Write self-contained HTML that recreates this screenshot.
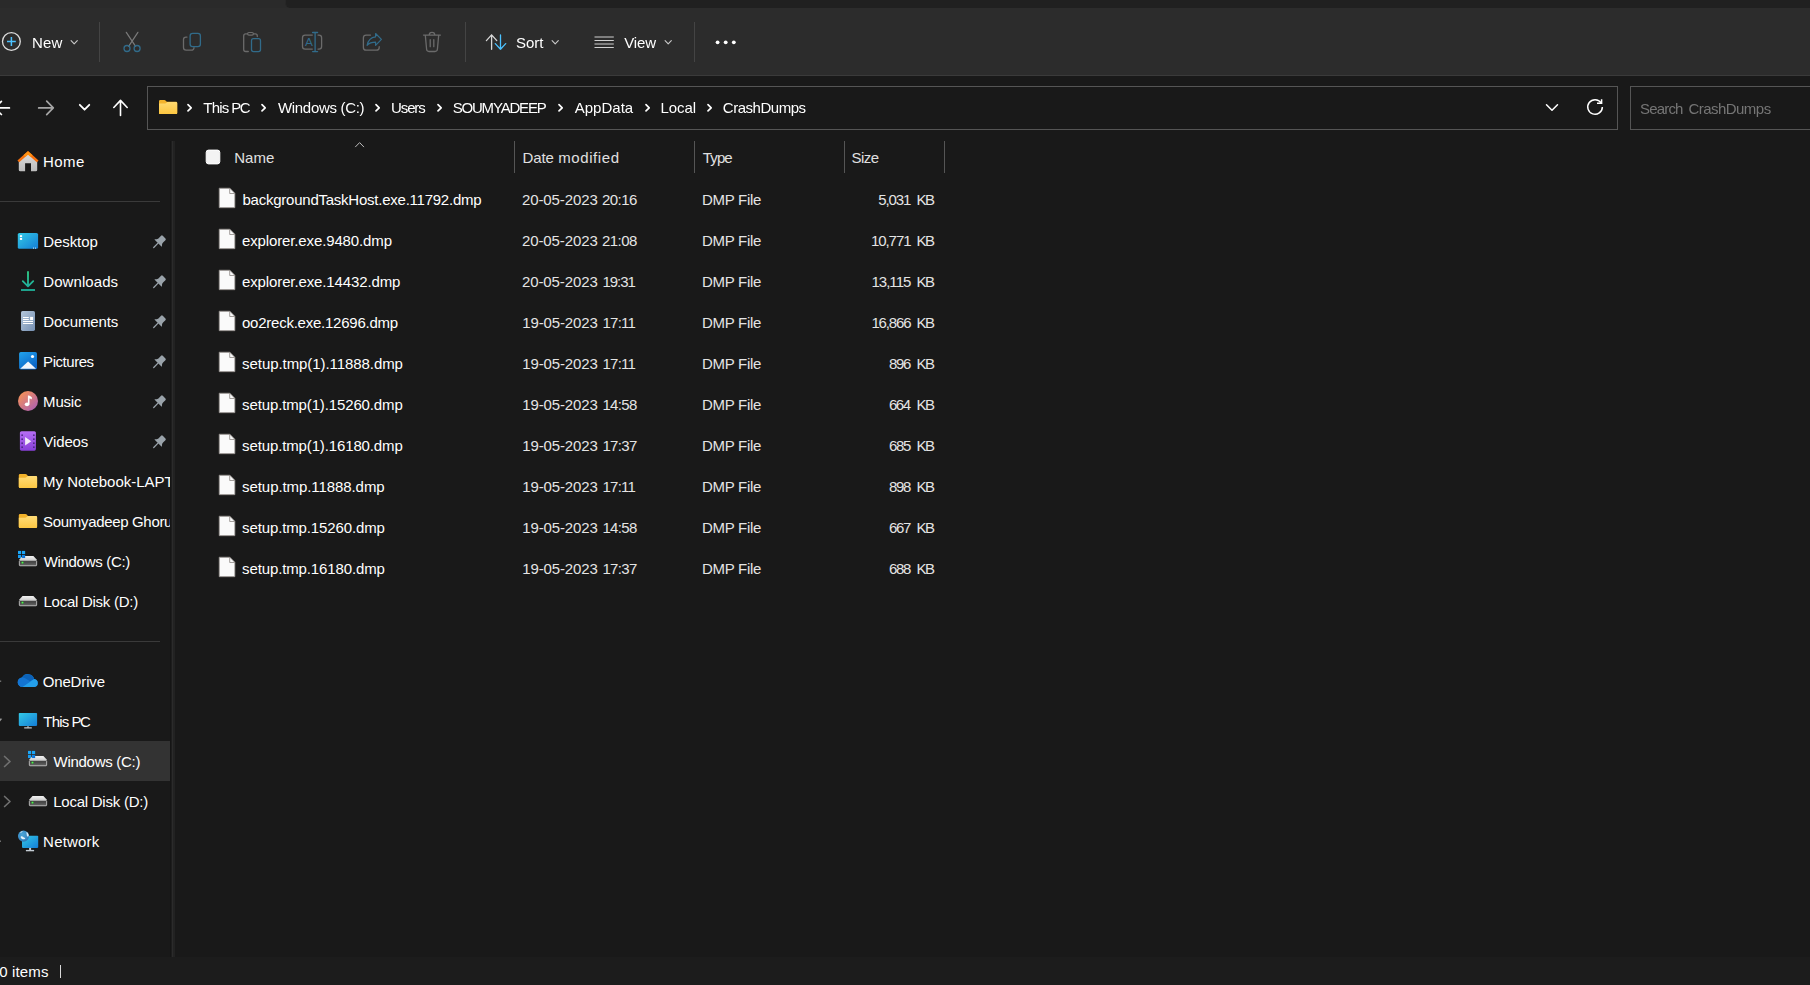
<!DOCTYPE html>
<html lang="en"><head><meta charset="utf-8"><title>CrashDumps</title>
<style>
html,body{margin:0;padding:0;background:#191919;overflow:hidden}
body{width:1810px;height:985px;position:relative;font-family:"Liberation Sans",sans-serif;color:#fff}
.t{position:absolute;white-space:pre;line-height:20px;height:20px}
.abs{position:absolute}
#tabstrip{left:285px;top:0;width:1525px;height:8px;background:#202020;border-left:1px solid #272727;border-bottom-left-radius:5px}
#tab{left:0;top:0;width:1810px;height:8px;background:#2a2a2a}
#toolbar{left:0;top:8px;width:1810px;height:67px;background:#2c2c2c}
#tbline{left:0;top:75px;width:1810px;height:1px;background:#3a3a3a}
.vsep{position:absolute;width:1px;background:#444}
#addr{left:147px;top:86px;width:1469px;height:42px;border:1px solid #555;box-sizing:content-box}
#search{left:1630px;top:86px;width:200px;height:42px;border:1px solid #555}
#sidediv{left:170px;top:141px;width:5px;height:816px;background:linear-gradient(90deg,#151515 0,#151515 1px,#1d1d1d 1px,#1d1d1d 1.700px,#2b2b2b 1.700px,#2b2b2b 3.300px,#222 3.300px,#222 5px)}
.hline{position:absolute;height:1px;background:#3a3a3a;left:0;width:160px}
#sel{left:0;top:741px;width:170px;height:40px;background:#333}
#status{left:0;top:957px;width:1810px;height:28px;background:#1c1c1c}
.colsep{position:absolute;top:141px;height:32px;width:1px;background:#555}
svg{position:absolute;overflow:visible}
#sbclip{position:absolute;left:0;top:0;width:170px;height:985px;overflow:hidden}
#gtexts{position:absolute;left:0;top:0;width:1810px;height:985px;will-change:transform}

</style></head>
<body>
<div class="abs" id="tab"></div>
<div class="abs" id="tabstrip"></div>
<div class="abs" id="toolbar"></div>
<div class="abs" id="tbline"></div>
<div class="vsep" style="left:99px;top:22px;height:40px"></div>
<div class="vsep" style="left:465px;top:22px;height:40px"></div>
<div class="vsep" style="left:694px;top:22px;height:40px"></div>
<div class="abs" id="addr"></div>
<div class="abs" id="search"></div>
<div class="abs" id="sidediv"></div>
<div class="hline" style="top:201px"></div>
<div class="hline" style="top:641px"></div>
<div class="abs" id="sel"></div>
<div class="abs" id="status"></div>
<div class="colsep" style="left:514px"></div>
<div class="colsep" style="left:694px"></div>
<div class="colsep" style="left:844px"></div>
<div class="colsep" style="left:944px"></div>

<!--ICONS_TOP-->
<div class="abs" style="left:60px;top:965px;width:1px;height:13px;background:#d8d8d8"></div>
<svg class="abs" style="left:0;top:0" width="1810" height="985" viewBox="0 0 1810 985" fill="none" stroke-linecap="round" stroke-linejoin="round">
<!-- New -->
<circle cx="11.4" cy="41.5" r="8.9" stroke="#dcdcdc" stroke-width="1.3"/>
<path d="M7 41.500h8.800M11.400 37.100v8.800" stroke="#4cc2ff" stroke-width="1.500" stroke-linecap="butt"/>
<path d="M71.1 40.700l3.100 3.100 3.100-3.100" stroke="#c8c8c8" stroke-width="1.150"/>
<!-- Cut -->
<path d="M126.3 32.3l9.3 14M137.9 32.3l-9.3 14" stroke="#7a7a7a" stroke-width="1.2"/>
<circle cx="127" cy="48.5" r="3" stroke="#316b8a" stroke-width="1.3"/>
<circle cx="137.1" cy="48.5" r="3" stroke="#316b8a" stroke-width="1.3"/>
<!-- Copy -->
<path d="M187 37.1h-1a2.5 2.5 0 0 0-2.5 2.5v8a2.6 2.6 0 0 0 2.6 2.6h5.4a2.5 2.5 0 0 0 2.5-2.5" stroke="#6b6b6b" stroke-width="1.3"/>
<rect x="190.1" y="33.4" width="10.3" height="13.2" rx="2.6" stroke="#316b8a" stroke-width="1.3"/>
<!-- Paste -->
<path d="M247.3 33.9h-1.6a2 2 0 0 0-2 2v13.6a2 2 0 0 0 2 2h2.6M253.7 33.9h1.6a2 2 0 0 1 2 2v0.6" stroke="#6b6b6b" stroke-width="1.3"/>
<rect x="247.6" y="32.5" width="5.8" height="2.6" rx="1.3" stroke="#6b6b6b" stroke-width="1.2"/>
<rect x="251.5" y="38.7" width="9" height="12.9" rx="2" stroke="#316b8a" stroke-width="1.3"/>
<!-- Rename -->
<path d="M312.3 35.1h-7.2a2.6 2.6 0 0 0-2.6 2.6v8.8a2.6 2.6 0 0 0 2.6 2.6h7.2M318 35.1h1a2.6 2.6 0 0 1 2.6 2.6v8.8a2.6 2.6 0 0 1-2.6 2.6h-1" stroke="#6b6b6b" stroke-width="1.3"/>
<path d="M312.6 32.5h5M312.6 51.6h5M315.1 32.5v19.1" stroke="#316b8a" stroke-width="1.3"/>
<text x="309" y="45.800" text-anchor="middle" font-family="Liberation Sans, sans-serif" font-size="10.600" fill="#316b8a" stroke="none" transform="translate(309 0) scale(1.120 1) translate(-309 0)">A</text>
<!-- Share -->
<path d="M370.5 35.1h-4.4a2.7 2.7 0 0 0-2.7 2.7v9.7a2.7 2.7 0 0 0 2.7 2.7h10.4a2.7 2.7 0 0 0 2.7-2.7v-0.8" stroke="#6b6b6b" stroke-width="1.3"/>
<path d="M367.100 45.300c0.900-4.700 3.900-8 8.500-8.500v-3.300l5.800 5.900-5.800 5.900v-3.100c-3.600 0-6.400 0.900-8.500 3.100z" stroke="#316b8a" stroke-width="1.200"/>
<!-- Delete -->
<path d="M423.5 35.1h16.9M429.2 35.1a2.8 2.8 0 0 1 5.6 0M425.3 35.1l1.3 14.2a2.4 2.4 0 0 0 2.4 2.2h6a2.4 2.4 0 0 0 2.4-2.2l1.3-14.2M430.2 39.7v7M433.8 39.7v7" stroke="#6b6b6b" stroke-width="1.3"/>
<!-- Sort -->
<path d="M491.6 49.3v-14.4M486.4 40.6l5.2-5.7 5.2 5.7" stroke="#d8d8d8" stroke-width="1.3"/>
<path d="M500.5 34.9v14.4M495.3 43.6l5.2 5.7 5.2-5.7" stroke="#4cc2ff" stroke-width="1.3"/>
<path d="M552.1 40.700l3.100 3.100 3.100-3.100" stroke="#c8c8c8" stroke-width="1.150"/>
<!-- View -->
<path d="M594.5 37h19.3M594.5 40.5h19.3M594.5 44h19.3M594.5 47.5h19.3" stroke="#d0d0d0" stroke-width="1.2" stroke-linecap="butt"/>
<path d="M665.1 40.700l3.100 3.100 3.100-3.100" stroke="#c8c8c8" stroke-width="1.150"/>
<!-- More -->
<circle cx="717.600" cy="42.300" r="1.900" fill="#fff"/><circle cx="725.700" cy="42.300" r="1.900" fill="#fff"/><circle cx="733.800" cy="42.300" r="1.900" fill="#fff"/>
<!-- Nav -->
<path d="M-5.200 107.900h14.600M1.400 101.300l-6.600 6.600 6.600 6.600" stroke="#fff" stroke-width="1.700"/>
<path d="M38.700 107.900h14.500M46.700 101.200l6.600 6.700-6.600 6.700" stroke="#a6a6a6" stroke-width="1.700"/>
<path d="M79.800 104.800l4.750 4.900 4.750-4.900" stroke="#fff" stroke-width="1.800"/>
<path d="M120.500 115.400v-14.700M113.800 107.500l6.700-7.100 6.700 7.100" stroke="#fff" stroke-width="1.600"/>
<!-- address folder -->
<path d="M159 101.2a1.2 1.2 0 0 1 1.2-1.2h4.3a1.5 1.5 0 0 1 1 .4l1.3 1.3h9.2a1.2 1.2 0 0 1 1.2 1.2v10a1.2 1.2 0 0 1-1.2 1.2h-15.8a1.2 1.2 0 0 1-1.2-1.2z" fill="#f3b32c" stroke="none"/>
<path d="M159 103.4h6.2a1.5 1.5 0 0 0 1-.4l1-1h8.8a1.2 1.2 0 0 1 1.2 1.2v9.7a1.2 1.2 0 0 1-1.2 1.2h-15.8a1.2 1.2 0 0 1-1.2-1.2z" fill="url(#fold)" stroke="none"/>
<!-- crumbs chevrons -->
<g stroke="#fff" stroke-width="1.700">
<path d="M188.0 104.700l3.200 3.100-3.200 3.100"/>
<path d="M262.0 104.700l3.200 3.100-3.200 3.100"/>
<path d="M376.0 104.700l3.200 3.100-3.200 3.100"/>
<path d="M438.0 104.700l3.200 3.100-3.200 3.100"/>
<path d="M559.0 104.700l3.200 3.100-3.200 3.100"/>
<path d="M646.0 104.700l3.200 3.100-3.200 3.100"/>
<path d="M708.0 104.700l3.200 3.100-3.200 3.100"/>
</g>
<!-- addr right -->
<path d="M1546.5 104.7l5.5 5.6 5.5-5.6" stroke="#fff" stroke-width="1.5"/>
<path d="M1602.35 107A7.3 7.3 0 1 1 1601.1 102.9" stroke="#fff" stroke-width="1.5" stroke-linecap="butt"/>
<path d="M1601.6 99.2v4.1h-4.6" stroke="#fff" stroke-width="1.5" stroke-linejoin="miter" stroke-linecap="butt"/>
<!-- header sort chevron -->
<path d="M355.5 146.8l4.1-4.2 4.1 4.2" stroke="#bdbdbd" stroke-width="1"/>
<defs>
<linearGradient id="fold" x1="0" y1="0" x2="0" y2="1"><stop offset="0" stop-color="#ffd970"/><stop offset="1" stop-color="#fcc640"/></linearGradient>
</defs>
</svg>
<svg class="abs" style="left:0;top:0" width="1810" height="985" viewBox="0 0 1810 985">
<defs>
<linearGradient id="gFold" x1="0" y1="0" x2="0" y2="1"><stop offset="0" stop-color="#ffdc78"/><stop offset="1" stop-color="#fcc743"/></linearGradient>
<linearGradient id="gDesk" x1="0" y1="0" x2="1" y2="1"><stop offset="0" stop-color="#33c9e6"/><stop offset="1" stop-color="#147dd6"/></linearGradient>
<linearGradient id="gDown" x1="0" y1="0" x2="0" y2="1"><stop offset="0" stop-color="#2fd18a"/><stop offset="1" stop-color="#1fae9c"/></linearGradient>
<linearGradient id="gDoc" x1="0" y1="0" x2="1" y2="1"><stop offset="0" stop-color="#b4c6da"/><stop offset="1" stop-color="#7690b2"/></linearGradient>
<linearGradient id="gPic" x1="0" y1="0" x2="0.6" y2="1"><stop offset="0" stop-color="#22a3ec"/><stop offset="1" stop-color="#0a63c6"/></linearGradient>
<linearGradient id="gMus" x1="0.15" y1="0.1" x2="0.85" y2="0.9"><stop offset="0" stop-color="#f4905a"/><stop offset="1" stop-color="#b062ad"/></linearGradient>
<linearGradient id="gVid" x1="0" y1="0" x2="0" y2="1"><stop offset="0" stop-color="#b76ef4"/><stop offset="1" stop-color="#8740d8"/></linearGradient>
<linearGradient id="gDrv" x1="0" y1="0" x2="0" y2="1"><stop offset="0" stop-color="#383838"/><stop offset="1" stop-color="#686868"/></linearGradient>
<linearGradient id="gWinBR" x1="0" y1="0" x2="1" y2="1"><stop offset="0" stop-color="#1591ec"/><stop offset="1" stop-color="#0766d2"/></linearGradient>
<linearGradient id="gDrvTop" x1="0" y1="0" x2="0" y2="1"><stop offset="0" stop-color="#f4f4f4"/><stop offset="1" stop-color="#d2d2d2"/></linearGradient>
<linearGradient id="gHome" x1="0" y1="0" x2="0" y2="1"><stop offset="0" stop-color="#dcdcdc"/><stop offset="1" stop-color="#bcbcbc"/></linearGradient>
<radialGradient id="gGlobe" cx="0.400" cy="0.350" r="0.750"><stop offset="0" stop-color="#4aa4d6"/><stop offset="0.600" stop-color="#3a8cc6"/><stop offset="1" stop-color="#2f6fae"/></radialGradient>
<symbol id="folder" overflow="visible">
<path d="M0 1.3A1.3 1.3 0 0 1 1.3 0h5.2a1.6 1.6 0 0 1 1.1.45L9.2 2h7.8a1.3 1.3 0 0 1 1.3 1.3v9.6a1.3 1.3 0 0 1-1.3 1.3H1.3A1.3 1.3 0 0 1 0 12.9z" fill="#f2b22a"/>
<path d="M0 3.9h6.4a1.6 1.6 0 0 0 1.1-.45L9 2h8a1.3 1.3 0 0 1 1.3 1.3v9.6a1.3 1.3 0 0 1-1.3 1.3H1.3A1.3 1.3 0 0 1 0 12.9z" fill="url(#gFold)"/>
</symbol>
<symbol id="drive" overflow="visible">
<path d="M3.6 0h10.9l3.7 4H0z" fill="url(#gDrvTop)"/>
<rect x="0.450" y="4.550" width="17.300" height="5.200" rx="0.600" fill="url(#gDrv)" stroke="#c2c2c2" stroke-width="0.900"/>
<circle cx="3.600" cy="6.600" r="1.500" fill="#2f8a2f" opacity="0.500"/><circle cx="3.600" cy="6.600" r="0.950" fill="#4cf24c"/>
</symbol>
<symbol id="winlogo" overflow="visible">
<rect x="0" y="0" width="3.150" height="3.150" fill="#1ba6f6"/><rect x="4" y="0" width="3.150" height="3.150" fill="#1ba6f6"/>
<rect x="0" y="4" width="3.150" height="3.150" fill="#169cf2"/><rect x="4" y="4" width="3.150" height="3.150" fill="url(#gWinBR)"/>
</symbol>
<symbol id="pin" overflow="visible">
<g transform="rotate(45)">
<path d="M-3.100-8a1.200 1.200 0 0 1 1.200-1.200h3.800a1.200 1.200 0 0 1 1.200 1.200v3.400c0 1.200 0.500 1.900 1.300 2.800l0.600 0.700a0.300 0.300 0 0 1-0.230 0.500h-9.540a0.300 0.300 0 0 1-0.230-0.500l0.600-0.700c0.800-0.900 1.300-1.600 1.300-2.800z" fill="#9aa3aa"/>
<path d="M0-0.600v6.100" stroke="#9aa3aa" stroke-width="1.250" stroke-linecap="round"/>
</g>
</symbol>
<symbol id="tchev" overflow="visible"><path d="M0 0l5.4 5-5.4 5" fill="none" stroke="#707070" stroke-width="1.700" stroke-linecap="round" stroke-linejoin="round"/></symbol>
</defs>
<!-- Home -->
<path d="M18.8 161.2l9.2-8.2 9.2 8.2v8.700a1.400 1.400 0 0 1-1.400 1.400h-4.800v-8h-5.900v8h-4.900a1.400 1.400 0 0 1-1.400-1.400z" fill="url(#gHome)"/>
<path d="M18.3 161.400l9.700-8.600 9.700 8.600" fill="none" stroke="#f7700d" stroke-width="2.600" stroke-linejoin="miter" stroke-linecap="butt"/>
<path d="M24.500 156l3.500-3.100 3.500 3.100" fill="none" stroke="#ff9212" stroke-width="2.600"/>
<!-- Desktop -->
<rect x="17.8" y="233" width="20.3" height="15.8" rx="1.6" fill="url(#gDesk)"/>
<rect x="19.9" y="235.2" width="2.2" height="1.9" fill="#fff"/><rect x="19.9" y="238" width="2.2" height="1.9" fill="#fff"/>
<rect x="33" y="247.6" width="1" height="1" fill="#d8eefc"/><rect x="35" y="247.6" width="1" height="1" fill="#d8eefc"/>
<!-- Downloads -->
<path d="M28 272v13.800M22.800 281.200l5.200 5.200 5.200-5.200" fill="none" stroke="url(#gDown)" stroke-width="1.800" stroke-linecap="round" stroke-linejoin="round"/>
<path d="M21 290h14" fill="none" stroke="#20b39a" stroke-width="1.800" stroke-linecap="butt"/>
<!-- Documents -->
<rect x="21" y="311" width="14" height="19.9" rx="1.6" fill="url(#gDoc)"/>
<path d="M23 317.500h5.800M23 319.500h5.800M23 321.500h10M23 323.500h10" stroke="#fff" stroke-width="1"/>
<rect x="30.1" y="316.9" width="3" height="3.2" fill="#fff"/>
<!-- Pictures -->
<rect x="19.1" y="351.9" width="17.9" height="17.7" rx="1.8" fill="url(#gPic)"/>
<circle cx="32.5" cy="356.5" r="1.6" fill="#fff"/>
<path d="M28.1 361.6l7.9 7.2h-15.8z" fill="#f2f6fb"/>
<!-- Music -->
<circle cx="28" cy="401" r="10" fill="url(#gMus)"/>
<ellipse cx="27" cy="404.3" rx="2.2" ry="1.9" fill="#fff"/>
<path d="M27.900 404.400v-8.900c0.500 0 2.900 0.400 3.900 1.700v2.300c-0.800-0.800-1.700-1.100-2.300-1.100v6z" fill="#fff"/>
<!-- Videos -->
<rect x="19.9" y="431.2" width="16" height="19.5" rx="1.6" fill="url(#gVid)"/>
<g fill="#4a257e"><rect x="21.4" y="434.4" width="1.5" height="1.6"/><rect x="21.4" y="438.4" width="1.5" height="1.6"/><rect x="21.4" y="442.4" width="1.5" height="1.6"/><rect x="21.4" y="446.4" width="1.5" height="1.6"/>
<rect x="33.1" y="434.4" width="1.5" height="1.6"/><rect x="33.1" y="438.4" width="1.5" height="1.6"/><rect x="33.1" y="442.4" width="1.5" height="1.6"/><rect x="33.1" y="446.4" width="1.5" height="1.6"/></g>
<path d="M25.1 437.1v8.4l6.2-4.2z" fill="#f3edf9"/>
<!-- Folders -->
<use href="#folder" x="18.8" y="473.9"/>
<use href="#folder" x="18.8" y="513.9"/>
<!-- Drives quick access -->
<use href="#drive" x="18.9" y="556"/>
<use href="#winlogo" x="18" y="550.9"/>
<use href="#drive" x="18.9" y="596"/>
<!-- OneDrive -->
<path d="M22.6 687a4.7 4.7 0 0 1-0.6-9.4a6.6 6.6 0 0 1 12.2 1.5a4 4 0 0 1 0.3 7.9z" fill="#1483de"/>
<path d="M22.1 677.7a6.6 6.6 0 0 1 12.1 1.4l-6 3.4z" fill="#0c62b8"/>
<path d="M17.9 682.4a4.7 4.7 0 0 1 4.2-4.8c1.5-0.1 2.5 0.3 3.5 0.9l5.6 3.4-9 5.1h0.4a4.7 4.7 0 0 1-4.7-4.6z" fill="#1374d2"/>
<path d="M22.6 687l11.6-7.9a4 4 0 0 1 0.3 7.9z" fill="#249fea"/>
<!-- This PC -->
<rect x="18.8" y="712.9" width="18.3" height="13" rx="0.8" fill="url(#gDesk)"/>
<path d="M28 726v1.6M24.2 727.9h7.6" stroke="#bfc5c9" stroke-width="1.1"/>
<!-- tree drives -->
<use href="#drive" x="28.9" y="756"/>
<use href="#winlogo" x="28" y="750.9"/>
<use href="#drive" x="28.9" y="796"/>
<use href="#tchev" x="4.6" y="756.5"/>
<use href="#tchev" x="4.6" y="796.5"/>
<!-- Network -->
<rect x="22" y="835.800" width="16.200" height="12.100" rx="0.800" fill="url(#gDesk)"/>
<path d="M30.100 847.900v2.200" stroke="#c4ccd4" stroke-width="2"/>
<path d="M25.900 850.600h8.200" stroke="#c4ccd4" stroke-width="1.400"/>
<circle cx="23.500" cy="836.100" r="5.550" fill="url(#gGlobe)"/>
<path d="M20.800 836.600c0.700-0.700 1.700-0.500 2.200 0.200c0.500 0.700 1.500 0.800 2.100 1.300c0.300 0.500-0.200 1.100-0.900 1.200c-1.300 0.200-2.600-0.400-3.200-1.300c-0.300-0.500-0.500-1-0.200-1.400z" fill="#f2fafe" opacity="0.920"/>
<path d="M26.600 832c1.100 0.500 1.900 1.700 2.100 3c0.100 0.800-0.200 1.500-0.800 1.600c-0.700 0-1-0.800-1.100-1.700c-0.100-1-0.600-1.900-0.200-2.900z" fill="#eef8fd" opacity="0.900"/>
<path d="M20 832.300c0.900-0.900 2.200-1.300 3.300-1.200c-0.800 0.500-1.800 1.300-2.400 2.200z" fill="#dff0fa" opacity="0.700"/>
<!-- left-edge cut-off expanders -->
<rect x="0" y="680.5" width="1.2" height="1.4" fill="#777"/>
<path d="M0 718.600l2.200 0.200l-2.200 2.600z" fill="#999"/>
<rect x="0" y="840.5" width="1" height="1.4" fill="#777"/>
<!-- pins -->
<use href="#pin" x="157.600" y="243.600"/>
<use href="#pin" x="157.600" y="283.600"/>
<use href="#pin" x="157.600" y="323.600"/>
<use href="#pin" x="157.600" y="363.600"/>
<use href="#pin" x="157.600" y="403.600"/>
<use href="#pin" x="157.600" y="443.600"/>
</svg>
<svg class="abs" style="left:0;top:0" width="1810" height="985" viewBox="0 0 1810 985">
<defs><symbol id="file" overflow="visible"><path d="M0.400 0.400h10.700l5 5.100v14.400h-15.700z" fill="#fafafa" stroke="#8b8783" stroke-width="0.800" stroke-linejoin="miter"/><path d="M10.900 0.600v5.100h5" fill="none" stroke="#8b8783" stroke-width="0.800"/></symbol></defs>
<rect x="206.200" y="150.100" width="13.600" height="13.800" rx="2.300" fill="#f3f3f3" stroke="#fff" stroke-width="1"/>
<use href="#file" x="218.800" y="187.8"/>
<use href="#file" x="218.800" y="228.8"/>
<use href="#file" x="218.800" y="269.8"/>
<use href="#file" x="218.800" y="310.8"/>
<use href="#file" x="218.800" y="351.8"/>
<use href="#file" x="218.800" y="392.8"/>
<use href="#file" x="218.800" y="433.8"/>
<use href="#file" x="218.800" y="474.8"/>
<use href="#file" x="218.800" y="515.8"/>
<use href="#file" x="218.800" y="556.8"/>
</svg>

<div id="texts">
<span class="t " style="left:234.2px;top:147.8px;font-size:15px;letter-spacing:0.06px;color:#e0e0e0">Name</span>
<span class="t " style="left:522.4px;top:147.8px;font-size:15px;letter-spacing:-0.07px;color:#e0e0e0">Date</span>
<span class="t " style="left:558.3px;top:147.8px;font-size:15px;letter-spacing:0.57px;color:#e0e0e0">modified</span>
<span class="t " style="left:702.8px;top:147.8px;font-size:15px;letter-spacing:-0.87px;color:#e0e0e0">Type</span>
<span class="t " style="left:851.5px;top:147.8px;font-size:15px;letter-spacing:-0.54px;color:#e0e0e0">Size</span>
<span class="t " style="left:242.5px;top:189.8px;font-size:15px;letter-spacing:-0.24px;color:#fff">backgroundTaskHost.exe.11792.dmp</span>
<span class="t " style="left:521.9px;top:189.8px;font-size:15px;letter-spacing:-0.09px;color:#e4e4e4">20-05-2023</span>
<span class="t " style="left:602.0px;top:189.8px;font-size:15px;letter-spacing:-0.57px;color:#e4e4e4">20:16</span>
<span class="t " style="left:702.0px;top:189.8px;font-size:15px;letter-spacing:-0.30px;color:#e4e4e4">DMP File</span>
<span class="t " style="left:878.2px;top:189.8px;font-size:15px;letter-spacing:-1.08px;color:#e4e4e4">5,031</span>
<span class="t " style="left:916.5px;top:189.8px;font-size:15px;letter-spacing:-1.60px;color:#e4e4e4">KB</span>
<span class="t " style="left:242.0px;top:230.8px;font-size:15px;letter-spacing:-0.13px;color:#fff">explorer.exe.9480.dmp</span>
<span class="t " style="left:521.9px;top:230.8px;font-size:15px;letter-spacing:-0.09px;color:#e4e4e4">20-05-2023</span>
<span class="t " style="left:602.0px;top:230.8px;font-size:15px;letter-spacing:-0.56px;color:#e4e4e4">21:08</span>
<span class="t " style="left:702.0px;top:230.8px;font-size:15px;letter-spacing:-0.30px;color:#e4e4e4">DMP File</span>
<span class="t " style="left:870.9px;top:230.8px;font-size:15px;letter-spacing:-1.05px;color:#e4e4e4">10,771</span>
<span class="t " style="left:916.5px;top:230.8px;font-size:15px;letter-spacing:-1.60px;color:#e4e4e4">KB</span>
<span class="t " style="left:242.0px;top:271.8px;font-size:15px;letter-spacing:-0.12px;color:#fff">explorer.exe.14432.dmp</span>
<span class="t " style="left:521.9px;top:271.8px;font-size:15px;letter-spacing:-0.09px;color:#e4e4e4">20-05-2023</span>
<span class="t " style="left:602.4px;top:271.8px;font-size:15px;letter-spacing:-1.01px;color:#e4e4e4">19:31</span>
<span class="t " style="left:702.0px;top:271.8px;font-size:15px;letter-spacing:-0.30px;color:#e4e4e4">DMP File</span>
<span class="t " style="left:871.4px;top:271.8px;font-size:15px;letter-spacing:-0.96px;color:#e4e4e4">13,115</span>
<span class="t " style="left:916.5px;top:271.8px;font-size:15px;letter-spacing:-1.60px;color:#e4e4e4">KB</span>
<span class="t " style="left:242.0px;top:312.8px;font-size:15px;letter-spacing:-0.24px;color:#fff">oo2reck.exe.12696.dmp</span>
<span class="t " style="left:522.3px;top:312.8px;font-size:15px;letter-spacing:-0.14px;color:#e4e4e4">19-05-2023</span>
<span class="t " style="left:602.4px;top:312.8px;font-size:15px;letter-spacing:-0.72px;color:#e4e4e4">17:11</span>
<span class="t " style="left:702.0px;top:312.8px;font-size:15px;letter-spacing:-0.30px;color:#e4e4e4">DMP File</span>
<span class="t " style="left:871.4px;top:312.8px;font-size:15px;letter-spacing:-1.16px;color:#e4e4e4">16,866</span>
<span class="t " style="left:916.5px;top:312.8px;font-size:15px;letter-spacing:-1.60px;color:#e4e4e4">KB</span>
<span class="t " style="left:242.1px;top:353.8px;font-size:15px;letter-spacing:-0.07px;color:#fff">setup.tmp(1).11888.dmp</span>
<span class="t " style="left:522.3px;top:353.8px;font-size:15px;letter-spacing:-0.14px;color:#e4e4e4">19-05-2023</span>
<span class="t " style="left:602.4px;top:353.8px;font-size:15px;letter-spacing:-0.72px;color:#e4e4e4">17:11</span>
<span class="t " style="left:702.0px;top:353.8px;font-size:15px;letter-spacing:-0.30px;color:#e4e4e4">DMP File</span>
<span class="t " style="left:889.0px;top:353.8px;font-size:15px;letter-spacing:-1.39px;color:#e4e4e4">896</span>
<span class="t " style="left:916.5px;top:353.8px;font-size:15px;letter-spacing:-1.60px;color:#e4e4e4">KB</span>
<span class="t " style="left:242.1px;top:394.8px;font-size:15px;letter-spacing:-0.13px;color:#fff">setup.tmp(1).15260.dmp</span>
<span class="t " style="left:522.3px;top:394.8px;font-size:15px;letter-spacing:-0.14px;color:#e4e4e4">19-05-2023</span>
<span class="t " style="left:602.4px;top:394.8px;font-size:15px;letter-spacing:-0.67px;color:#e4e4e4">14:58</span>
<span class="t " style="left:702.0px;top:394.8px;font-size:15px;letter-spacing:-0.30px;color:#e4e4e4">DMP File</span>
<span class="t " style="left:889.0px;top:394.8px;font-size:15px;letter-spacing:-1.48px;color:#e4e4e4">664</span>
<span class="t " style="left:916.5px;top:394.8px;font-size:15px;letter-spacing:-1.60px;color:#e4e4e4">KB</span>
<span class="t " style="left:242.1px;top:435.8px;font-size:15px;letter-spacing:-0.13px;color:#fff">setup.tmp(1).16180.dmp</span>
<span class="t " style="left:522.3px;top:435.8px;font-size:15px;letter-spacing:-0.14px;color:#e4e4e4">19-05-2023</span>
<span class="t " style="left:602.4px;top:435.8px;font-size:15px;letter-spacing:-0.66px;color:#e4e4e4">17:37</span>
<span class="t " style="left:702.0px;top:435.8px;font-size:15px;letter-spacing:-0.30px;color:#e4e4e4">DMP File</span>
<span class="t " style="left:889.0px;top:435.8px;font-size:15px;letter-spacing:-1.38px;color:#e4e4e4">685</span>
<span class="t " style="left:916.5px;top:435.8px;font-size:15px;letter-spacing:-1.60px;color:#e4e4e4">KB</span>
<span class="t " style="left:242.1px;top:476.8px;font-size:15px;letter-spacing:-0.08px;color:#fff">setup.tmp.11888.dmp</span>
<span class="t " style="left:522.3px;top:476.8px;font-size:15px;letter-spacing:-0.14px;color:#e4e4e4">19-05-2023</span>
<span class="t " style="left:602.4px;top:476.8px;font-size:15px;letter-spacing:-0.72px;color:#e4e4e4">17:11</span>
<span class="t " style="left:702.0px;top:476.8px;font-size:15px;letter-spacing:-0.30px;color:#e4e4e4">DMP File</span>
<span class="t " style="left:889.0px;top:476.8px;font-size:15px;letter-spacing:-1.35px;color:#e4e4e4">898</span>
<span class="t " style="left:916.5px;top:476.8px;font-size:15px;letter-spacing:-1.60px;color:#e4e4e4">KB</span>
<span class="t " style="left:242.1px;top:517.8px;font-size:15px;letter-spacing:-0.13px;color:#fff">setup.tmp.15260.dmp</span>
<span class="t " style="left:522.3px;top:517.8px;font-size:15px;letter-spacing:-0.14px;color:#e4e4e4">19-05-2023</span>
<span class="t " style="left:602.4px;top:517.8px;font-size:15px;letter-spacing:-0.67px;color:#e4e4e4">14:58</span>
<span class="t " style="left:702.0px;top:517.8px;font-size:15px;letter-spacing:-0.30px;color:#e4e4e4">DMP File</span>
<span class="t " style="left:889.0px;top:517.8px;font-size:15px;letter-spacing:-1.29px;color:#e4e4e4">667</span>
<span class="t " style="left:916.5px;top:517.8px;font-size:15px;letter-spacing:-1.60px;color:#e4e4e4">KB</span>
<span class="t " style="left:242.1px;top:558.8px;font-size:15px;letter-spacing:-0.13px;color:#fff">setup.tmp.16180.dmp</span>
<span class="t " style="left:522.3px;top:558.8px;font-size:15px;letter-spacing:-0.14px;color:#e4e4e4">19-05-2023</span>
<span class="t " style="left:602.4px;top:558.8px;font-size:15px;letter-spacing:-0.66px;color:#e4e4e4">17:37</span>
<span class="t " style="left:702.0px;top:558.8px;font-size:15px;letter-spacing:-0.30px;color:#e4e4e4">DMP File</span>
<span class="t " style="left:889.0px;top:558.8px;font-size:15px;letter-spacing:-1.32px;color:#e4e4e4">688</span>
<span class="t " style="left:916.5px;top:558.8px;font-size:15px;letter-spacing:-1.60px;color:#e4e4e4">KB</span>
<span class="t " style="left:-0.8px;top:961.8px;font-size:15px;letter-spacing:0.15px;color:#fff">0 items</span>
</div>
<div id="sbclip">
<span class="t sb" style="left:42.9px;top:151.8px;font-size:15px;letter-spacing:0.46px;color:#fff">Home</span>
<span class="t sb" style="left:43.3px;top:231.8px;font-size:15px;letter-spacing:-0.10px;color:#fff">Desktop</span>
<span class="t sb" style="left:43.3px;top:271.8px;font-size:15px;letter-spacing:0.07px;color:#fff">Downloads</span>
<span class="t sb" style="left:43.3px;top:311.8px;font-size:15px;letter-spacing:-0.10px;color:#fff">Documents</span>
<span class="t sb" style="left:43.1px;top:351.8px;font-size:15px;letter-spacing:-0.46px;color:#fff">Pictures</span>
<span class="t sb" style="left:43.1px;top:391.8px;font-size:15px;letter-spacing:-0.21px;color:#fff">Music</span>
<span class="t sb" style="left:43.3px;top:431.8px;font-size:15px;letter-spacing:-0.11px;color:#fff">Videos</span>
<span class="t sb" style="left:43.0px;top:471.8px;font-size:15px;letter-spacing:-0.01px;color:#fff">My Notebook-LAPT</span>
<span class="t sb" style="left:43.1px;top:511.8px;font-size:15px;letter-spacing:-0.33px;color:#fff">Soumyadeep Ghoru</span>
<span class="t sb" style="left:43.7px;top:551.8px;font-size:15px;letter-spacing:-0.31px;color:#fff">Windows (C:)</span>
<span class="t sb" style="left:43.5px;top:591.8px;font-size:15px;letter-spacing:-0.26px;color:#fff">Local Disk (D:)</span>
<span class="t sb" style="left:42.7px;top:671.8px;font-size:15px;letter-spacing:-0.14px;color:#fff">OneDrive</span>
<span class="t sb" style="left:43.3px;top:711.8px;font-size:15px;letter-spacing:-0.81px;color:#fff">This</span>
<span class="t sb" style="left:71.5px;top:711.8px;font-size:15px;letter-spacing:-1.60px;color:#fff">PC</span>
<span class="t sb" style="left:53.6px;top:751.8px;font-size:15px;letter-spacing:-0.29px;color:#fff">Windows (C:)</span>
<span class="t sb" style="left:53.2px;top:791.8px;font-size:15px;letter-spacing:-0.24px;color:#fff">Local Disk (D:)</span>
<span class="t sb" style="left:43.1px;top:831.8px;font-size:15px;letter-spacing:0.20px;color:#fff">Network</span>
</div>
<div id="gtexts">
<span class="t g" style="left:32.1px;top:32.8px;font-size:15px;letter-spacing:0.13px;color:#fff">New</span>
<span class="t g" style="left:515.9px;top:32.8px;font-size:15px;letter-spacing:0.03px;color:#fff">Sort</span>
<span class="t g" style="left:624.3px;top:32.8px;font-size:15px;letter-spacing:-0.18px;color:#fff">View</span>
<span class="t g" style="left:203.3px;top:97.8px;font-size:15px;letter-spacing:-0.81px;color:#fff">This</span>
<span class="t g" style="left:231.3px;top:97.8px;font-size:15px;letter-spacing:-1.60px;color:#fff">PC</span>
<span class="t g" style="left:278.0px;top:97.8px;font-size:15px;letter-spacing:-0.32px;color:#fff">Windows (C:)</span>
<span class="t g" style="left:391.0px;top:97.8px;font-size:15px;letter-spacing:-1.10px;color:#fff">Users</span>
<span class="t g" style="left:452.7px;top:97.8px;font-size:15px;letter-spacing:-1.19px;color:#fff">SOUMYADEEP</span>
<span class="t g" style="left:574.7px;top:97.8px;font-size:15px;letter-spacing:0.02px;color:#fff">AppData</span>
<span class="t g" style="left:660.6px;top:97.8px;font-size:15px;letter-spacing:-0.11px;color:#fff">Local</span>
<span class="t g" style="left:722.8px;top:97.8px;font-size:15px;letter-spacing:-0.47px;color:#fff">CrashDumps</span>
<span class="t g" style="left:1640.0px;top:98.8px;font-size:15px;letter-spacing:-0.82px;color:#757575">Search</span>
<span class="t g" style="left:1688.4px;top:98.8px;font-size:15px;letter-spacing:-0.53px;color:#757575">CrashDumps</span>
</div>
</body></html>
